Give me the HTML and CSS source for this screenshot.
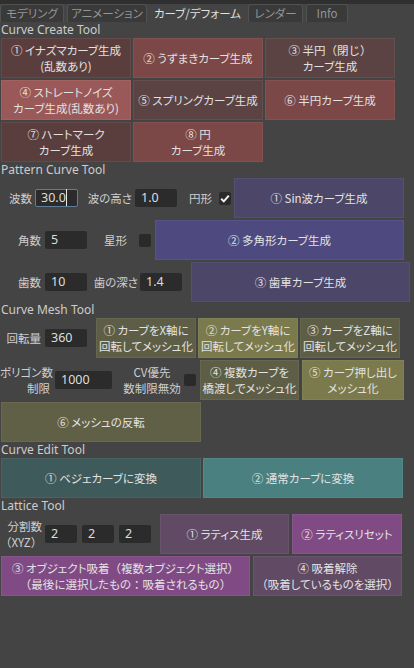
FILE: index.html
```html
<!DOCTYPE html>
<html lang="ja">
<head>
<meta charset="utf-8">
<title>Curve Tools</title>
<link rel="stylesheet" href="styles.css">
</head>
<body>
<div class="tabs">
  <div class="tab t1">モデリング</div>
  <div class="tab t2">アニメーション</div>
  <div class="tab t3 active">カーブ/デフォーム</div>
  <div class="tab t4">レンダー</div>
  <div class="tab t5">Info</div>
</div>

<div class="hdr">Curve Create Tool</div>
<div class="grid3">
  <div class="btn r1"><span>① イナズマカーブ生成<br>(乱数あり)</span></div>
  <div class="btn r2"><span>② うずまきカーブ生成</span></div>
  <div class="btn r3"><span>③ 半円<span class="fw">（閉じ）</span><br>カーブ生成</span></div>
  <div class="btn r4"><span>④ ストレートノイズ<br>カーブ生成(乱数あり)</span></div>
  <div class="btn r3"><span>⑤ スプリングカーブ生成</span></div>
  <div class="btn r2"><span>⑥ 半円カーブ生成</span></div>
  <div class="btn r1"><span>⑦ ハートマーク<br>カーブ生成</span></div>
  <div class="btn r2"><span>⑧ 円<br>カーブ生成</span></div>
</div>

<div class="hdr">Pattern Curve Tool</div>
<div class="rows">
  <div class="row">
    <div class="lbl w33">波数</div>
    <div class="field focus ml2 fw43"><span class="caret">30.0</span></div>
    <div class="lbl w55">波の高さ</div>
    <div class="field ml2 fw42">1.0</div>
    <div class="lbl w36">円形</div>
    <div class="chk ml6"><svg width="12" height="13" viewBox="0 0 12 13"><path d="M2.2 6.8 L4.8 9.4 L9.8 3.6" fill="none" stroke="#f2f2f2" stroke-width="2"/></svg></div>
    <div class="btn p1 ml3 bw170"><span>① Sin波カーブ生成</span></div>
  </div>
  <div class="row">
    <div class="lbl w42">角数</div>
    <div class="field ml3 fw42">5</div>
    <div class="lbl w41">星形</div>
    <div class="chk ml11"></div>
    <div class="btn p2 ml4 bw249"><span>② 多角形カーブ生成</span></div>
  </div>
  <div class="row">
    <div class="lbl w42">歯数</div>
    <div class="field ml3 fw42">10</div>
    <div class="lbl w53">歯の深さ</div>
    <div class="field fw42">1.4</div>
    <div class="btn p1 ml9 bw219"><span>③ 歯車カーブ生成</span></div>
  </div>
</div>

<div class="hdr">Curve Mesh Tool</div>
<div class="rows">
  <div class="row">
    <div class="lbl w42">回転量</div>
    <div class="field ml3 fw42">360</div>
    <div class="btn m1 ml9 bw100"><span>① カーブをX軸に<br>回転してメッシュ化</span></div>
    <div class="btn m2 ml2 bw100"><span>② カーブをY軸に<br>回転してメッシュ化</span></div>
    <div class="btn m1 ml2 bw100"><span>③ カーブをZ軸に<br>回転してメッシュ化</span></div>
  </div>
  <div class="row">
    <div class="lbl w52 two">ポリゴン数<br>制限</div>
    <div class="field ml3 fw57">1000</div>
    <div class="lbl ml9 w62 two center">CV優先<br>数制限無効</div>
    <div class="chk ml1 sq"></div>
    <div class="btn m1 ml4 bw99"><span>④ 複数カーブを<br>橋渡しでメッシュ化</span></div>
    <div class="btn m2 ml3 bw102"><span>⑤ カーブ押し出し<br>メッシュ化</span></div>
  </div>
  <div class="row">
    <div class="btn m3 ml1 bw200"><span>⑥ メッシュの反転</span></div>
  </div>
</div>

<div class="hdr">Curve Edit Tool</div>
<div class="rows">
  <div class="row">
    <div class="btn e1 ml1 bw200"><span>① ベジェカーブに変換</span></div>
    <div class="btn e2 ml2 bw200"><span>② 通常カーブに変換</span></div>
  </div>
</div>

<div class="hdr">Lattice Tool</div>
<div class="rows">
  <div class="row">
    <div class="lbl w43 two">分割数<br><span class="fw">（XYZ）</span></div>
    <div class="field ml2 fw32">2</div>
    <div class="field ml5 fw32">2</div>
    <div class="field ml5 fw32">2</div>
    <div class="btn l1 ml9 bw129"><span>① ラティス生成</span></div>
    <div class="btn l2 ml3 bw110"><span>② ラティスリセット</span></div>
  </div>
  <div class="row">
    <div class="btn l2 ml1 bw249"><span>③ オブジェクト吸着<span class="fw">（</span>複数オブジェクト選択<span class="fw">）</span><br><span class="fw">（</span>最後に選択したもの<span class="fw">：</span>吸着されるもの<span class="fw">）</span></span></div>
    <div class="btn l1 ml3 bw149"><span>④ 吸着解除<br><span class="fw">（</span>吸着しているものを選択<span class="fw">）</span></span></div>
  </div>
</div>
</body>
</html>
```

FILE: styles.css
```css
html, body {
  margin: 0;
  padding: 0;
  background: #444444;
}
body {
  width: 414px;
  height: 668px;
  overflow: hidden;
  font-family: "Noto Sans CJK JP", "Noto Sans", sans-serif;
  font-feature-settings: "palt";
  color: #dcdcdc;
  font-size: 12px;
}
.fw { font-feature-settings: normal; }

/* tabs */
.tabs {
  display: flex;
  align-items: flex-end;
  height: 22px;
  box-sizing: border-box;
  border-top: 4px solid #2f2f2f;
  gap: 3px;
}
.tab {
  height: 18px;
  box-sizing: border-box;
  background: #3a3a3a;
  border: 1px solid #525252;
  border-bottom: none;
  border-radius: 3px 3px 0 0;
  color: #959595;
  font-size: 11.5px;
  line-height: 16px;
  text-align: center;
  white-space: nowrap;
  overflow: hidden;
}
.tab.active {
  background: #444444;
  border-color: #444444;
  color: #e0e0e0;
}
.t1 { width: 64px; }
.t2 { width: 80px; }
.t3 { width: 95px; }
.t4 { width: 55px; }
.t5 { width: 42px; }

/* section header */
.hdr {
  height: 16px;
  line-height: 16px;
  padding-left: 1px;
  font-family: "Noto Sans", sans-serif;
  font-size: 12px;
  color: #cccccc;
  white-space: nowrap;
}

/* create grid */
.grid3 {
  display: grid;
  grid-template-columns: repeat(3, 130px);
  grid-auto-rows: 40px;
  gap: 2px;
  padding-left: 1px;
}

.rows {
  display: flex;
  flex-direction: column;
  gap: 2px;
}
.row {
  display: flex;
  align-items: center;
  height: 40px;
}

/* buttons */
.btn {
  height: 40px;
  box-sizing: border-box;
  display: flex;
  align-items: center;
  justify-content: center;
  text-align: center;
  line-height: 16px;
  font-size: 11.5px;
  color: #e2e2e2;
  border: 1px solid rgba(255, 255, 255, 0.06);
  white-space: nowrap;
  flex: none;
}
.r1 { background: #5a3e3e; }
.r2 { background: #7b4747; }
.r3 { background: #5b4343; }
.r4 { background: #9b5858; }
.p1 { background: #4c4668; }
.p2 { background: #4e4a80; }
.m1 { background: #5e5e46; }
.m2 { background: #7a7a4c; }
.m3 { background: #606046; }
.e1 { background: #3e5a5a; }
.e2 { background: #4a8080; }
.l1 { background: #604a64; }
.l2 { background: #804a85; }

/* labels */
.lbl {
  flex: none;
  box-sizing: border-box;
  text-align: right;
  color: #cfcfcf;
  font-size: 11.5px;
  line-height: 16px;
  white-space: nowrap;
  padding-right: 1px;
}
.lbl.center { text-align: center; padding-right: 0; }

/* fields */
.field {
  flex: none;
  height: 18px;
  box-sizing: border-box;
  background: #2b2b2b;
  border-radius: 2px;
  padding-left: 6px;
  font-family: "Noto Sans", sans-serif;
  font-size: 12.5px;
  line-height: 18px;
  color: #dedede;
}
.field.focus {
  border: 1px solid #5e7f99;
  line-height: 16px;
  padding-left: 5px;
}
.caret {
  border-right: 1px solid #e8e8e8;
}

/* checkbox */
.chk {
  flex: none;
  width: 12px;
  height: 13px;
  background: #2a2a2a;
  border-radius: 2px;
  display: flex;
}
.chk.sq { height: 12px; }

/* widths and margins */
.w33 { width: 33px; }
.w36 { width: 36px; }
.w41 { width: 41px; }
.w42 { width: 42px; }
.w43 { width: 43px; }
.w52 { width: 52px; padding-right: 2px; }
.w53 { width: 53px; padding-right: 2px; }
.w55 { width: 55px; }
.w62 { width: 62px; }

.fw32 { width: 32px; }
.fw42 { width: 42px; }
.fw43 { width: 43px; }
.fw57 { width: 57px; }

.bw99 { width: 99px; }
.bw100 { width: 100px; }
.bw102 { width: 102px; }
.bw110 { width: 110px; }
.bw129 { width: 129px; }
.bw149 { width: 149px; }
.bw170 { width: 170px; }
.bw200 { width: 200px; }
.bw219 { width: 219px; }
.bw249 { width: 249px; }

.ml1 { margin-left: 1px; }
.ml2 { margin-left: 2px; }
.ml3 { margin-left: 3px; }
.ml4 { margin-left: 4px; }
.ml5 { margin-left: 5px; }
.ml6 { margin-left: 6px; }
.ml9 { margin-left: 9px; }
.ml11 { margin-left: 11px; }
```
